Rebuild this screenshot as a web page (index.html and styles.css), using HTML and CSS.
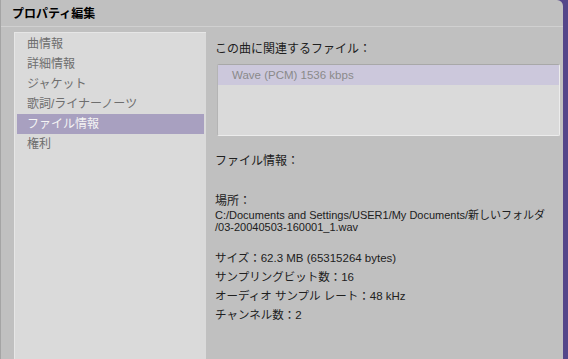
FILE: index.html
```html
<!DOCTYPE html>
<html lang="ja">
<head>
  <meta charset="UTF-8">
  <title>プロパティ編集</title>
  <link rel="stylesheet" href="styles.css">
</head>
<body>

<div class="window">
  <header class="titlebar">プロパティ編集</header>

  <div class="content">
    <ul class="menu">
      <li>曲情報</li>
      <li>詳細情報</li>
      <li>ジャケット</li>
      <li>歌詞/ライナーノーツ</li>
      <li class="selected">ファイル情報</li>
      <li>権利</li>
    </ul>

    <div class="detail">
      <div class="label first">この曲に関連するファイル：</div>
      <div class="listbox">
        <div class="row">Wave (PCM) 1536 kbps</div>
      </div>

      <div class="label info">ファイル情報：</div>

      <div class="label place">場所：</div>
      <div class="path">C:/Documents and Settings/USER1/My Documents/新しいフォルダ<br>/03-20040503-160001_1.wav</div>

      <div class="props">
        <div>サイズ：62.3 MB (65315264 bytes)</div>
        <div>サンプリングビット数：16</div>
        <div>オーディオ サンプル レート：48 kHz</div>
        <div>チャンネル数：2</div>
      </div>
    </div>
  </div>
</div>

</body>
</html>
```

FILE: styles.css
```css
body {
  margin: 0;
  background-color: #54468a;
  font-family: 'Liberation Sans', 'Noto Sans CJK JP', sans-serif;
  font-size: 12px;
  color: #202020;
  height: 359px;
  overflow: hidden;
}
.window {
  width: 562px;
  height: 359px;
  background-color: #c0c0c0;
  border-left: 1px solid #a4a4a4;
  border-top-right-radius: 6px;
  display: flex;
  flex-direction: column;
}
.titlebar {
  height: 26px;
  line-height: 28px;
  padding-left: 11px;
  font-weight: bold;
  font-size: 12px;
  color: #000;
  border-bottom: 1px solid #d0d0d0;
}
.content {
  flex: 1;
  display: flex;
  padding-top: 5px;
}
.menu {
  list-style: none;
  margin: 0 0 0 13px;
  padding: 1px 2px 0 2px;
  width: 187px;
  background-color: #dadada;
  border-top: 1px solid #e6e6e6;
  border-left: 1px solid #e6e6e6;
}
.menu li {
  height: 20px;
  line-height: 20px;
  padding-left: 10px;
  color: #6e6e6e;
}
.menu li.selected {
  background-color: #a8a0c0;
  color: #f4f4f4;
}
.detail {
  flex: 1;
  padding-left: 9px;
}
.label {
  line-height: 14px;
}
.label.first {
  margin-top: 10px;
}
.listbox {
  margin: 8px 3px 0 2px;
  height: 70px;
  background-color: #dadada;
  border-top: 1px solid #a8a8a8;
  border-left: 1px solid #b4b4b4;
  border-right: 1px solid #ececec;
  border-bottom: 1px solid #ececec;
  border-radius: 2px;
}
.row {
  height: 20px;
  line-height: 20px;
  padding-left: 14px;
  background-color: #ccc8dc;
  color: #8a8a8a;
  font-size: 11.5px;
}
.label.info {
  margin-top: 18px;
}
.label.place {
  margin-top: 26px;
}
.path {
  margin-top: 1px;
  line-height: 12px;
  font-size: 11px;
  white-space: nowrap;
}
.props {
  margin-top: 18px;
  display: flex;
  flex-direction: column;
  gap: 5px;
  font-size: 11.5px;
}
.props div {
  line-height: 14px;
}
```
